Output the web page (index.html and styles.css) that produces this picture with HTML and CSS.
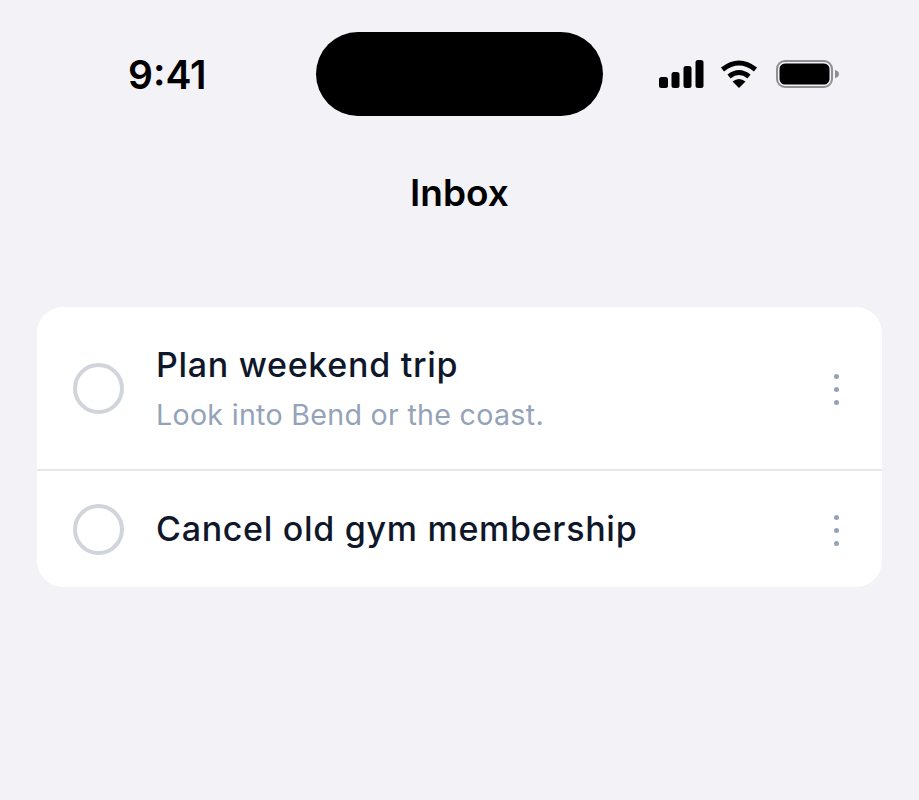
FILE: index.html
```html
<!DOCTYPE html>
<html lang="en">
<head>
  <meta charset="UTF-8" />
  <meta name="viewport" content="width=device-width, initial-scale=1.0"/>
  <title>Inbox</title>

  <link rel="stylesheet" href="styles.css">
</head>
<body>
  <div class="status-bar">
    <div class="time">9:41</div>
    <div class="island"></div>
    <div class="status-icons">
      <svg class="signal" width="45" height="28" viewBox="0 0 45 28" fill="#000">
        <rect x="0" y="17" width="9" height="11" rx="2.5" />
        <rect x="12.5" y="12" width="8" height="16" rx="2.5" />
        <rect x="24.5" y="6" width="8" height="22" rx="2.5" />
        <rect x="36.5" y="0" width="8" height="28" rx="2.5" />
      </svg>
      <svg class="wifi" width="38" height="28" viewBox="0 0 38 28" fill="none" stroke="#000">
        <path d="M2.5 9.5 Q19 -3.5 35.5 9.5" stroke-width="5" />
        <path d="M9 16.5 Q19 8.5 29 16.5" stroke-width="5" />
        <path d="M19 28 L12.5 21.5 Q19 16.5 25.5 21.5 Z" fill="#000" stroke="none" />
      </svg>
      <svg class="battery" width="63" height="28" viewBox="0 0 63 28">
        <rect x="1" y="1" width="55" height="26" rx="8" fill="none" stroke="#8e8e93" stroke-width="2" />
        <rect x="3.5" y="3.5" width="50" height="21" rx="5.5" fill="#000" />
        <path d="M59 10 Q63 11 63 14 Q63 17 59 18 Z" fill="#8e8e93" />
      </svg>
    </div>
  </div>

  <h1 class="title">Inbox</h1>

  <div class="card">
    <div class="task task-first">
      <div class="check"></div>
      <div class="task-text">
        <div class="task-name">Plan weekend trip</div>
        <div class="task-note">Look into Bend or the coast.</div>
      </div>
      <div class="more"><span></span><span></span><span></span></div>
    </div>
    <div class="task">
      <div class="check"></div>
      <div class="task-text">
        <div class="task-name">Cancel old gym membership</div>
      </div>
      <div class="more"><span></span><span></span><span></span></div>
    </div>
  </div>
</body>
</html>
```

FILE: styles.css
```css
* {
  margin: 0;
  padding: 0;
  box-sizing: border-box;
  font-family: Inter, "Liberation Sans", sans-serif;
}

body {
  min-height: 100vh;
  background: #f2f2f7;
  overflow: hidden;
}

.status-bar {
  display: flex;
  align-items: center;
  height: 84px;
  margin-top: 32px;
  padding-left: 128px;
}

.time {
  width: 188px;
  font-size: 39px;
  font-weight: 600;
  color: #000;
}

.island {
  width: 287px;
  height: 84px;
  background: #000;
  border-radius: 42px;
}

.status-icons {
  display: flex;
  align-items: center;
  gap: 16px;
  height: 28px;
  margin-left: 56px;
}

.battery {
  margin-left: 2px;
}

.title {
  margin-top: 54px;
  text-align: center;
  font-size: 37px;
  line-height: 46px;
  font-weight: 600;
  color: #000;
}

.card {
  margin: 91px 37px 0;
  background: white;
  border-radius: 26px;
  overflow: hidden;
}

.task {
  display: flex;
  align-items: center;
  height: 116px;
  padding: 0 36px;
}

.task-first {
  height: 164px;
  border-bottom: 2px solid #e5e7eb;
}

.check {
  flex: none;
  width: 51px;
  height: 51px;
  border: 4px solid #d1d5db;
  border-radius: 50%;
  margin-right: 32px;
}

.task-text {
  flex: 1;
}

.task-name {
  font-size: 34px;
  line-height: 44px;
  font-weight: 500;
  letter-spacing: 0.7px;
  color: #0f172a;
}

.task-note {
  margin-top: 9px;
  margin-bottom: -3px;
  font-size: 28.6px;
  line-height: 38px;
  letter-spacing: 0.3px;
  color: #94a3b8;
}

.task-first .task-name {
  margin-top: -2px;
}

.more {
  display: flex;
  flex-direction: column;
  gap: 8px;
  margin-top: 2px;
  margin-right: 7px;
}

.more span {
  width: 5px;
  height: 5px;
  border-radius: 50%;
  background: #94a3b8;
}
```
